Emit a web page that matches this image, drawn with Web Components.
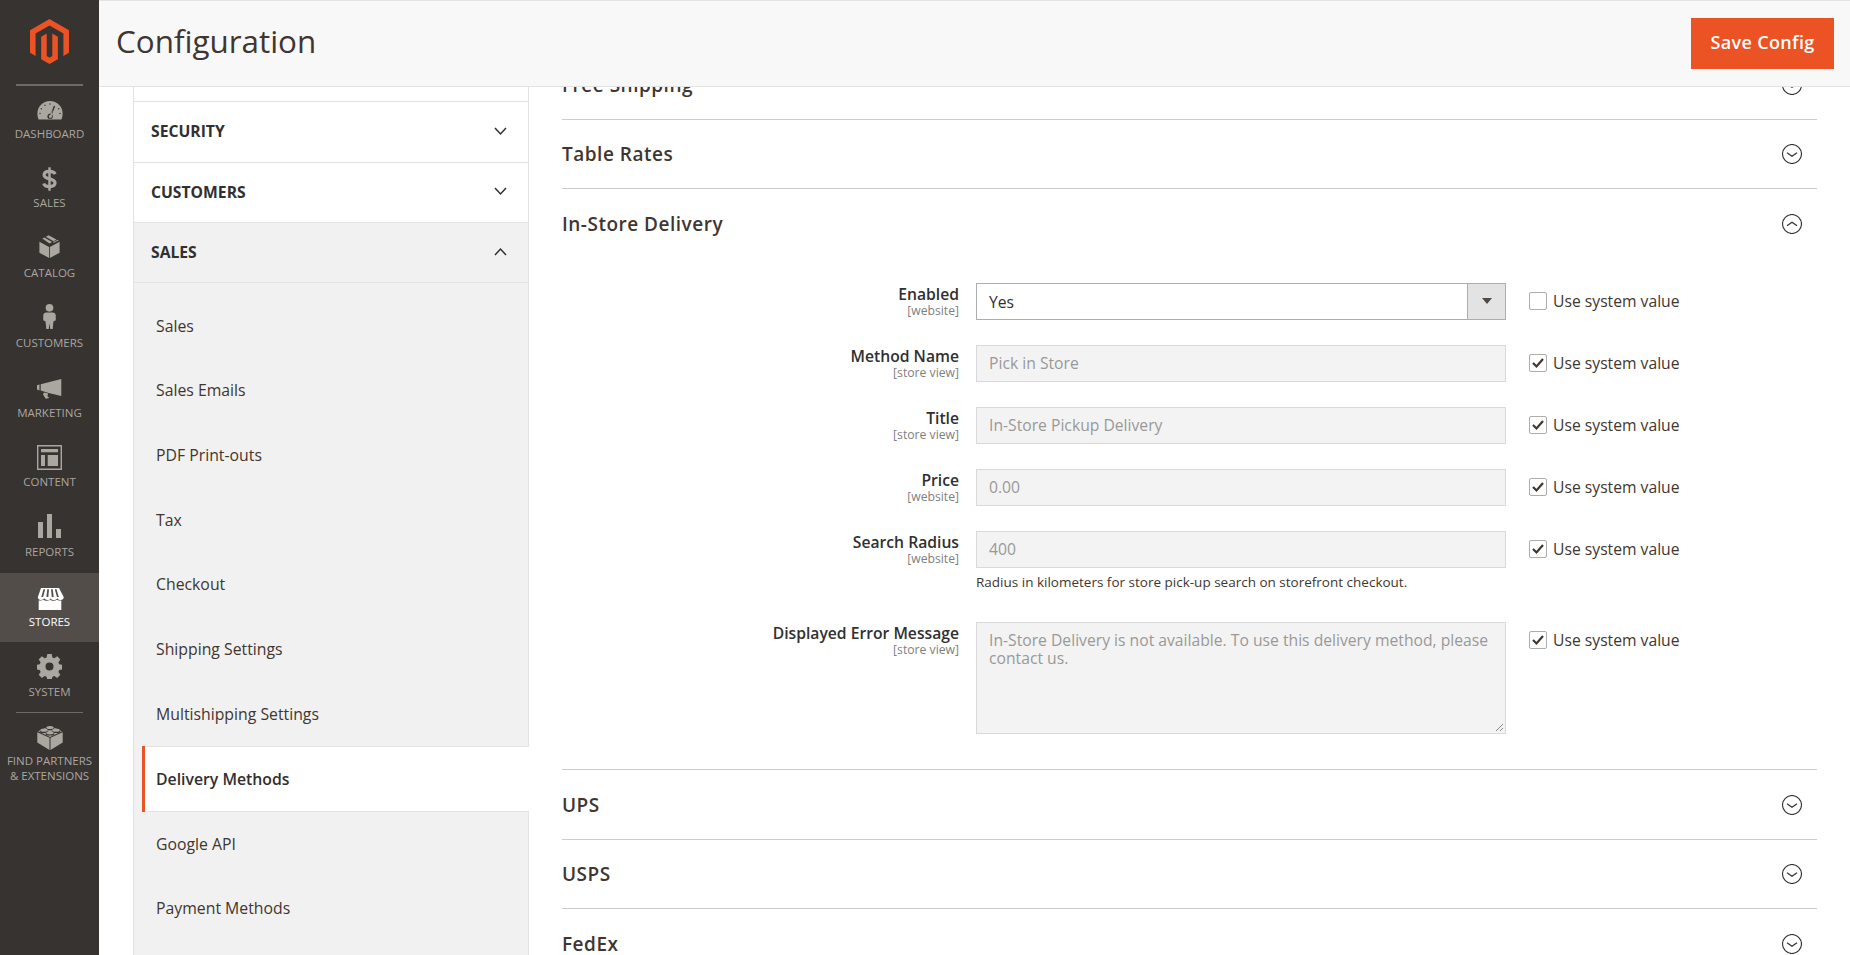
<!DOCTYPE html>
<html lang="en">
<head>
<meta charset="utf-8">
<title>Configuration</title>
<style>
  html, body { margin: 0; height: 955px; overflow: hidden; background: #fff; }
  body { font-family: "Open Sans", "Noto Sans", sans-serif; color: #303030; }
  #page { display: flex; height: 955px; }
  #main { flex: 1; min-width: 0; display: flex; flex-direction: column; height: 955px; }
  #work { flex: 1; min-height: 0; display: flex; overflow: hidden; padding-left: 34px; }
</style>
</head>
<body>
<div id="page">
  <mg-sidebar>
    <mg-nav-item label="DASHBOARD" icon="dashboard" gap="5.5"></mg-nav-item>
    <mg-nav-item label="SALES" icon="sales" gap="4.5"></mg-nav-item>
    <mg-nav-item label="CATALOG" icon="catalog" gap="7.5"></mg-nav-item>
    <mg-nav-item label="CUSTOMERS" icon="customers" gap="6"></mg-nav-item>
    <mg-nav-item label="MARKETING" icon="marketing" gap="5.5"></mg-nav-item>
    <mg-nav-item label="CONTENT" icon="content" gap="4.5"></mg-nav-item>
    <mg-nav-item label="REPORTS" icon="reports" gap="6.5"></mg-nav-item>
    <mg-nav-item label="STORES" icon="stores" gap="3.5" active></mg-nav-item>
    <mg-nav-item label="SYSTEM" icon="system" gap="4.5"></mg-nav-item>
    <mg-nav-item label="FIND PARTNERS<br>&amp; EXTENSIONS" icon="partners" gap="3" extra></mg-nav-item>
  </mg-sidebar>
  <div id="main">
    <mg-header title="Configuration" action="Save Config"></mg-header>
    <div id="work">
      <mg-tabs>
        <mg-tab-group label="SECURITY"></mg-tab-group>
        <mg-tab-group label="CUSTOMERS"></mg-tab-group>
        <mg-tab-group label="SALES" open>
          <mg-tab-link>Sales</mg-tab-link>
          <mg-tab-link>Sales Emails</mg-tab-link>
          <mg-tab-link>PDF Print-outs</mg-tab-link>
          <mg-tab-link>Tax</mg-tab-link>
          <mg-tab-link>Checkout</mg-tab-link>
          <mg-tab-link>Shipping Settings</mg-tab-link>
          <mg-tab-link>Multishipping Settings</mg-tab-link>
          <mg-tab-link active>Delivery Methods</mg-tab-link>
          <mg-tab-link>Google API</mg-tab-link>
          <mg-tab-link>Payment Methods</mg-tab-link>
        </mg-tab-group>
      </mg-tabs>
      <mg-sections>
        <mg-section title="Free Shipping"></mg-section>
        <mg-section title="Table Rates"></mg-section>
        <mg-section title="In-Store Delivery" open>
          <mg-field label="Enabled" scope="[website]" type="select" value="Yes"></mg-field>
          <mg-field label="Method Name" scope="[store view]" value="Pick in Store" inherit></mg-field>
          <mg-field label="Title" scope="[store view]" value="In-Store Pickup Delivery" inherit></mg-field>
          <mg-field label="Price" scope="[website]" value="0.00" inherit></mg-field>
          <mg-field label="Search Radius" scope="[website]" value="400" inherit hint="Radius in kilometers for store pick-up search on storefront checkout."></mg-field>
          <mg-field label="Displayed Error Message" scope="[store view]" type="textarea" value="In-Store Delivery is not available. To use this delivery method, please contact us." inherit></mg-field>
        </mg-section>
        <mg-section title="UPS"></mg-section>
        <mg-section title="USPS"></mg-section>
        <mg-section title="FedEx"></mg-section>
      </mg-sections>
    </div>
  </div>
</div>

<script>
const navIcons = {
  dashboard: `<svg width="26" height="19" viewBox="0 0 26 19"><path fill="currentColor" d="M13 0C5.800 0 .4 5.600.4 12.400c0 2.300.5 4.500 1.200 6.100h22.800c.7-1.600 1.200-3.800 1.200-6.100C25.600 5.600 20.200 0 13 0z"/><path fill="#373330" d="M16.900 4.700l1.300.6-3.300 8.200a2.700 2.700 0 0 1-.1 4.200h-3.400c-1.300-1-1.400-3.200-.2-4.300.8-.8 1.700-1 2.600-.9z"/><path fill="currentColor" d="M15.700 8.800l-2.500 5.300c-.7 0-1.300.6-1.300 1.400 0 .5.200.9.500 1.200h1.900c.7-.5.9-1.500.4-2.200z"/><g fill="#373330"><circle cx="13" cy="3" r=".7"/><circle cx="8" cy="4.200" r=".7"/><circle cx="4.300" cy="7.800" r=".7"/><circle cx="3" cy="12.500" r=".7"/><circle cx="23" cy="12.500" r=".7"/><circle cx="21.700" cy="7.800" r=".7"/></g></svg>`,
  sales: `<svg width="15" height="24" viewBox="0 0 16 25"><path fill="none" stroke="currentColor" stroke-width="3.400" d="M14 7.200C13.200 5.300 11 4.400 8 4.400c-3.400 0-5.800 1.500-5.800 3.900 0 5.200 11.700 3 11.700 8.300 0 2.600-2.500 4-5.900 4-3.200 0-5.500-1.100-6.200-3.300"/><path fill="currentColor" d="M6.700 0h2.600v25H6.700z"/></svg>`,
  catalog: `<svg width="21" height="23" viewBox="0 0 21 23"><path fill="currentColor" d="M6.800 1.800L9.600.3l7.800 4.300-2.900 1.600zM3.300 3.600l2-1 7.800 4.300-2.600 1.500zM.4 6.800l9.700 5.200V23L.4 17.700zM20.600 6.800L10.900 12v11l9.700-5.300zM14.800 7.800l5-2.500-1.100-.6-4.900 2.600z"/></svg>`,
  customers: `<svg width="13" height="25" viewBox="0 0 13 26"><circle fill="currentColor" cx="6.500" cy="4" r="4"/><path fill="currentColor" d="M3.300 8.800h6.400c2 0 3.300 1.300 3.300 3.200v4.800l-2.400 1.300-.8 8H7.300l-.8-6-.8 6H3.200l-.8-8L0 16.800V12c0-1.900 1.300-3.200 3.300-3.200z"/></svg>`,
  marketing: `<svg width="25" height="20" viewBox="0 0 25 20"><path fill="currentColor" d="M0 6.300l2.500-.9v6l-2.500-.8zM3.700 5.200L24.300 0v17l-9.400-2.300-3.300-.8-7.900-2.400zM7.200 13.400l4 1.200-.8 2.400 1.800 2-3.500.8-2.800-4.600z"/></svg>`,
  content: `<svg width="25" height="25" viewBox="0 0 25 25"><path fill="none" stroke="currentColor" stroke-width="1.400" d="M.7.7h23.600v23.600H.7z"/><path fill="currentColor" d="M4 4h17v3.200H4zM4 10h4v11H4zM10.700 10H21v11H10.700z"/></svg>`,
  reports: `<svg width="23" height="24" viewBox="0 0 23 24"><path fill="currentColor" d="M0 8h5v16H0zM9 0h5v24H9zM18 15h5v9h-5z"/></svg>`,
  stores: `<svg width="28" height="22" viewBox="0 0 28 22"><path fill="currentColor" d="M5 0h18l4.800 9.200c0 1.600-1.500 2.800-3.200 2.800-1.600 0-2.700-.8-3.300-1.800-.6 1-1.700 1.800-3.400 1.800-1.500 0-2.500-.6-3.200-1.600-.7 1-1.700 1.600-3.200 1.600s-2.600-.7-3.300-1.700c-.6 1-1.700 1.700-3.200 1.700-1.700 0-3.200-1.200-3.200-2.800z"/><path fill="#524d49" d="M7.500 1.300h1.700L7.100 9H5.300zM11.300 1.300H13L12.300 9h-1.900zM15 1.300h1.700L17.700 9h-1.900zM18.800 1.300h1.700L22.800 9H21z"/><path fill="currentColor" d="M2.700 12.500c1.500.3 3 0 4.300-.8 1.100.8 2.300 1.100 3.500 1.100s2.500-.4 3.500-1.100c1 .8 2.300 1.100 3.500 1.100s2.400-.3 3.500-1.100c1.300.8 2.800 1.100 4.300.8V22H2.700z"/></svg>`,
  system: `<svg width="25" height="25" viewBox="0 0 25 25"><path fill="currentColor" fill-rule="evenodd" d="M10.300 0h4.400l.7 3.400 1.900.8 2.900-1.900 3.100 3.100-1.900 2.900.8 1.900 3.400.7v4.400l-3.400.7-.8 1.900 1.900 2.900-3.100 3.100-2.900-1.900-1.900.8-.7 3.400h-4.400l-.7-3.400-1.900-.8-2.900 1.900-3.100-3.100 1.900-2.900-.8-1.900-3.400-.7v-4.400l3.400-.7.8-1.900-1.900-2.900 3.100-3.100 2.900 1.900 1.900-.8zM12.500 8.500a4 4 0 1 0 0 8 4 4 0 0 0 0-8z"/></svg>`,
  partners: `<svg width="26" height="25" viewBox="0 0 26 25"><path fill="currentColor" d="M12.500 12.800L.3 7.200v10.300L12.500 25zM13.500 12.800l12.200-5.600v10.300L13.500 25z"/><path fill="currentColor" d="M13 1.200L25 6.300 13 11.900 1 6.300z"/><g fill="#373330"><ellipse cx="13" cy="3.700" rx="4.300" ry="1.500"/><ellipse cx="7" cy="6.400" rx="4.300" ry="1.500"/><ellipse cx="19" cy="6.400" rx="4.300" ry="1.500"/><ellipse cx="13" cy="9" rx="4.300" ry="1.500"/></g><g fill="currentColor"><ellipse cx="13" cy="2.500" rx="3.700" ry="1.600"/><ellipse cx="7" cy="5.200" rx="3.700" ry="1.600"/><ellipse cx="19" cy="5.200" rx="3.700" ry="1.600"/><ellipse cx="13" cy="7.800" rx="3.700" ry="1.600"/></g></svg>`
}

class MgSidebar extends HTMLElement {
  constructor() {
    super()
    this.attachShadow({ mode: 'open' }).innerHTML = `
      <style>
        :host { display: block; flex: none; width: 99px; height: 955px; background: #373330; font-family: "Open Sans", sans-serif; }
        .logo { height: 84px; display: flex; justify-content: center; align-items: flex-start; padding-top: 19px; box-sizing: border-box; }
        svg { display: block; }
        hr { margin: 0 16px 4px; height: 2px; border: 0; background: #736963; }
      </style>
      <div class="logo">
        <svg width="39" height="45" viewBox="1.600 0 20.800 24"><path fill="#eb5324" d="M12 24l-4.455-2.572v-12l2.970-1.715v12.001l1.485.902 1.485-.902V7.713l2.970 1.715v12L12 24zM22.391 6v12l-2.970 1.714V7.713L12 3.430 4.574 7.713v12L1.609 18V6L12 0l10.391 6z"/></svg>
      </div>
      <hr>
      <slot></slot>`
  }
}

class MgNavItem extends HTMLElement {
  constructor() {
    super()
    const extra = this.hasAttribute('extra')
    this.attachShadow({ mode: 'open' }).innerHTML = `
      <style>
        :host { display: block; color: #aaa6a0; font-size: 11.500px; line-height: 15px; text-align: center; }
        :host([active]) { color: #fff; background: #524d49; margin-top: -5px; margin-bottom: 6px; }
        :host([extra]) { margin-top: -5.750px; padding-top: 13px; position: relative; }
        .wrap { height: 69.750px; box-sizing: border-box; display: flex; flex-direction: column; align-items: center; justify-content: flex-end; padding-bottom: 19.250px; }
        :host([active]) .wrap { height: 68.750px; padding-bottom: 13.250px; }
        :host([extra]) .wrap { height: auto; display: block; padding: 0; }
        :host([extra]) .line { position: absolute; left: 16px; right: 16px; top: 0; height: 1px; background: #736963; }
        .ic { display: flex; justify-content: center; margin-bottom: ${this.getAttribute('gap')}px; }
        svg { display: block; }
      </style>
      ${extra ? '<div class="line"></div>' : ''}
      <div class="wrap">
        <div class="ic">${navIcons[this.getAttribute('icon')] || ''}</div>
        <div>${this.getAttribute('label')}</div>
      </div>`
  }
}

class MgHeader extends HTMLElement {
  constructor() {
    super()
    this.attachShadow({ mode: 'open' }).innerHTML = `
      <style>
        :host { display: flex; flex: none; position: relative; z-index: 2; height: 87px; box-sizing: border-box; align-items: center; justify-content: space-between; background: #f8f8f8; border-top: 1px solid #e3e3e3; border-bottom: 1px solid #e3e3e3; padding: 0 16px 0 17px; font-family: "Open Sans", sans-serif; }
        h1 { margin: 0 0 5px; font-size: 31.400px; line-height: 40px; font-weight: 400; color: #41362f; }
        button { all: unset; box-sizing: border-box; width: 143px; height: 51px; padding-bottom: 4px; display: flex; align-items: center; justify-content: center; background: #eb5324; color: #fff; font-size: 18px; font-weight: 600; letter-spacing: .35px; }
      </style>
      <h1>${this.getAttribute('title')}</h1>
      <button>${this.getAttribute('action')}</button>`
  }
}

class MgTabs extends HTMLElement {
  constructor() {
    super()
    this.attachShadow({ mode: 'open' }).innerHTML = `
      <style>
        :host { display: block; flex: none; width: 396px; font-family: "Open Sans", sans-serif; }
        .top { height: 14px; border: solid #e3e3e3; border-width: 0 1px; }
      </style>
      <div class="top"></div>
      <slot></slot>`
  }
}

class MgTabGroup extends HTMLElement {
  constructor() {
    super()
    const open = this.hasAttribute('open')
    const chevron = open ? 'M1 8l5.500-6 5.500 6' : 'M1 2l5.500 6 5.500-6'
    this.attachShadow({ mode: 'open' }).innerHTML = `
      <style>
        :host { display: block; }
        .title { display: flex; align-items: center; justify-content: space-between; box-sizing: border-box; height: 60.500px; padding: 0 21px 1px 17px; border: 1px solid #e3e3e3; border-bottom: 0; background: #fff; color: #303030; font-size: 15.700px; font-weight: 700; }
        :host([open]) .title { background: #f1f1f1; border-bottom: 1px solid #e3e3e3; height: 61px; }
        .list { padding-top: 10.300px; min-height: 700px; background: #f1f1f1; border: solid #e3e3e3; border-width: 0 1px; }
        .list[hidden] { display: none; }
        svg { display: block; margin-bottom: 1px; }
      </style>
      <div class="title">
        <span>${this.getAttribute('label')}</span>
        <svg width="13" height="10" viewBox="0 0 13 10"><path fill="none" stroke="#303030" stroke-width="1.500" d="${chevron}"/></svg>
      </div>
      <div class="list" ${open ? '' : 'hidden'}><slot></slot></div>`
  }
}

class MgTabLink extends HTMLElement {
  constructor() {
    super()
    this.attachShadow({ mode: 'open' }).innerHTML = `
      <style>
        :host { display: flex; align-items: center; box-sizing: border-box; height: 64.700px; padding-left: 22px; font-size: 15.800px; color: #41362f; }
        :host([active]) { position: relative; font-weight: 600; color: #303030; height: 66px; margin: -.300px -1px -.500px 8px; background: #fff; padding-left: 14px; border-top: 1px solid #e3e3e3; border-bottom: 1px solid #e3e3e3; }
        :host([active]) .mark { position: absolute; left: 0; top: -1px; bottom: -1px; width: 3px; background: #eb5324; }
      </style>
      <div class="mark"></div><slot></slot>`
  }
}

class MgSections extends HTMLElement {
  constructor() {
    super()
    this.attachShadow({ mode: 'open' }).innerHTML = `
      <style>
        :host { display: block; flex: none; width: 1255px; margin-left: 33px; margin-top: -37px; font-family: "Open Sans", sans-serif; }
      </style>
      <slot></slot>`
  }
}

class MgSection extends HTMLElement {
  constructor() {
    super()
    const open = this.hasAttribute('open')
    const arrow = open ? 'M5 11.800L10 8.200l5 3.600' : 'M5 8.700l5 3.600 5-3.600'
    this.attachShadow({ mode: 'open' }).innerHTML = `
      <style>
        :host { display: block; border-bottom: 1px solid #cccccc; }
        :host(:last-child) { border-bottom: 0; }
        .head { display: flex; align-items: center; justify-content: space-between; box-sizing: border-box; height: 68.600px; padding: .8px 15px 0 0; font-size: 19px; line-height: 20px; font-weight: 600; color: #41362f; letter-spacing: .5px; }
        :host([open]) .head { margin-bottom: 24.300px; height: 69.500px; padding-top: 0; }
        .body { padding-bottom: 35px; }
        .body[hidden] { display: none; }
        svg { display: block; }
      </style>
      <div class="head">
        <span>${this.getAttribute('title')}</span>
        <svg width="20" height="20" viewBox="0 0 20 20"><circle cx="10" cy="10" r="9.500" fill="none" stroke="#303030" stroke-width="1.100"/><path fill="none" stroke="#303030" stroke-width="1.200" d="${arrow}"/></svg>
      </div>
      <div class="body" ${open ? '' : 'hidden'}><slot></slot></div>`
  }
}

class MgField extends HTMLElement {
  constructor() {
    super()
    const type = this.getAttribute('type') || 'text'
    const value = this.getAttribute('value')
    const hint = this.getAttribute('hint')
    const inherit = this.hasAttribute('inherit')
    let control
    if (type === 'select') {
      control = `<div class="box select"><span>${value}</span><i><b></b></i></div>`
    } else if (type === 'textarea') {
      control = `<div class="box off area">${value}
        <svg class="grip" width="9" height="9" viewBox="0 0 9 9"><path fill="none" stroke="#8a8a8a" d="M1 8l7-7M5 8l3-3"/></svg></div>`
    } else {
      control = `<div class="box off">${value}</div>`
    }
    this.attachShadow({ mode: 'open' }).innerHTML = `
      <style>
        :host { display: grid; grid-template-columns: 397px 530px 1fr; margin-bottom: 25px; font-size: 15.700px; }
        :host(:last-child) { margin-bottom: 0; }
        .label { text-align: right; padding-top: 1px; }
        .label b { display: block; font-weight: 600; line-height: 20px; color: #303030; }
        .label small { display: block; font-size: 12.200px; line-height: 14px; color: #808080; }
        .ctl { margin-left: 17px; width: 530px; }
        .box { box-sizing: border-box; height: 37px; padding: 0 12px; display: flex; align-items: center; }
        .off { border: 1px solid #d9d9d9; background: #f3f3f3; color: #999; }
        .select { border: 1px solid #adadad; background: #fff; color: #303030; padding-right: 0; justify-content: space-between; }
        .select span { padding-top: 1px; }
        .select i { box-sizing: border-box; width: 38px; height: 35px; display: flex; align-items: center; justify-content: center; background: #e3e3e3; border-left: 1px solid #adadad; }
        .select b { width: 0; height: 0; border: solid transparent; border-width: 6px 5px 0; border-top-color: #514943; }
        .area { position: relative; height: 112px; display: block; padding-top: 7.750px; line-height: 18.500px; }
        .grip { position: absolute; right: 1px; bottom: 1px; display: block; }
        .hint { font-size: 13.500px; line-height: 18px; margin-top: 5px; margin-bottom: 6px; color: #41362f; }
        .use { margin-left: 40px; height: 37px; display: flex; align-items: center; gap: 6px; color: #41362f; }
        .use span { width: 18px; height: 18px; box-sizing: border-box; border: 1px solid #adadad; border-radius: 2px; background: #fff; display: block; }
        .use svg { display: block; }
      </style>
      <div class="label"><b>${this.getAttribute('label')}</b><small>${this.getAttribute('scope')}</small></div>
      <div class="ctl">${control}${hint ? `<div class="hint">${hint}</div>` : ''}</div>
      <div class="use"><span>${inherit ? '<svg width="16" height="16" viewBox="0 0 16 16"><path fill="none" stroke="#41362f" stroke-width="2.200" d="M3 8l3.500 3.500L13 4"/></svg>' : ''}</span>Use system value</div>`
  }
}

customElements.define('mg-sidebar', MgSidebar)
customElements.define('mg-nav-item', MgNavItem)
customElements.define('mg-header', MgHeader)
customElements.define('mg-tabs', MgTabs)
customElements.define('mg-tab-group', MgTabGroup)
customElements.define('mg-tab-link', MgTabLink)
customElements.define('mg-sections', MgSections)
customElements.define('mg-section', MgSection)
customElements.define('mg-field', MgField)
</script>
</body>
</html>
